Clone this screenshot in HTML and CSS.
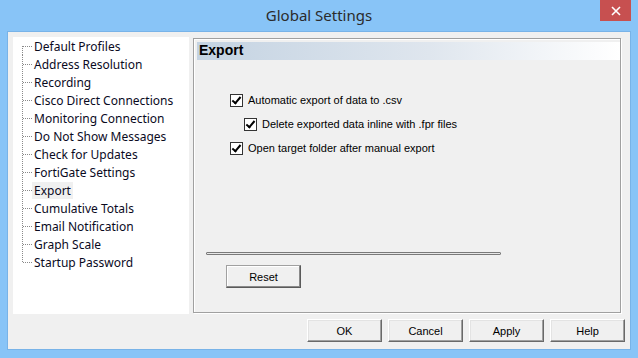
FILE: index.html
```html
<!DOCTYPE html>
<html lang="en">
<head>
  <meta charset="UTF-8">
  <title>Global Settings</title>
  <link rel="stylesheet" href="styles.css">
</head>
<body>
  <div class="window">
      <div class="titlebar">
          <span></span>
          <span class="title">Global Settings</span>
          <button class="close" title="Close">
              <svg width="10" height="10" viewBox="0 0 10 10"><path d="M1 1 L9 9 M9 1 L1 9" stroke="#fff" stroke-width="1.6" fill="none"/></svg>
          </button>
      </div>

      <div class="client">
          <div class="main">
              <ul class="tree">
                  <li><span class="label">Default Profiles</span></li>
                  <li><span class="label">Address Resolution</span></li>
                  <li><span class="label">Recording</span></li>
                  <li><span class="label">Cisco Direct Connections</span></li>
                  <li><span class="label">Monitoring Connection</span></li>
                  <li><span class="label">Do Not Show Messages</span></li>
                  <li><span class="label">Check for Updates</span></li>
                  <li><span class="label">FortiGate Settings</span></li>
                  <li class="selected"><span class="label">Export</span></li>
                  <li><span class="label">Cumulative Totals</span></li>
                  <li><span class="label">Email Notification</span></li>
                  <li><span class="label">Graph Scale</span></li>
                  <li class="last"><span class="label">Startup Password</span></li>
              </ul>

              <div class="panel">
                  <div class="panel-head">Export</div>
                  <div class="panel-body">
                      <div class="options">
                          <label class="check"><span class="box checked"></span>Automatic export of data to .csv</label>
                          <label class="check sub"><span class="box checked"></span>Delete exported data inline with .fpr files</label>
                          <label class="check"><span class="box checked"></span>Open target folder after manual export</label>
                      </div>
                      <div class="sep"></div>
                      <button class="btn btn-reset">Reset</button>
                  </div>
              </div>
          </div>

          <div class="actions">
              <button class="btn">OK</button>
              <button class="btn">Cancel</button>
              <button class="btn">Apply</button>
              <button class="btn">Help</button>
          </div>
      </div>
  </div>
</body>
</html>
```

FILE: styles.css
```css
* {
    margin: 0;
    padding: 0;
    box-sizing: border-box;
}

body {
    width: 638px;
    height: 358px;
    overflow: hidden;
    font-family: 'Liberation Sans', Arial, sans-serif;
    font-size: 11px;
    color: #000;
}

.window {
    width: 638px;
    height: 358px;
    background: #88c4f7;
    padding: 0 7px 8px;
    display: flex;
    flex-direction: column;
}

.titlebar {
    height: 31px;
    display: grid;
    grid-template-columns: 1fr auto 1fr;
    align-items: start;
}

.title {
    font-family: 'Noto Sans', 'Open Sans', sans-serif;
    font-size: 15px;
    color: #2b2b2b;
    line-height: 30px;
}

.close {
    justify-self: end;
    width: 31px;
    height: 21px;
    margin-right: 0;
    border: none;
    background: #c75050;
    display: flex;
    align-items: center;
    justify-content: center;
}

.client {
    flex: 1;
    background: #f0f0f0;
    border: 1px solid #78b3e8;
    padding: 5px 0 0 5px;
}

.main {
    display: flex;
    align-items: flex-start;
}

/* tree on the left */
.tree {
    list-style: none;
    width: 176px;
    height: 277px;
    background: #fff;
    padding: 0 0 0 9px;
    font-family: 'Noto Sans', 'Open Sans', sans-serif;
    font-size: 12px;
}

.tree li {
    height: 18px;
    display: flex;
    align-items: center;
}

.tree li::before {
    content: '';
    width: 10px;
    height: 18px;
    background:
        repeating-linear-gradient(to bottom, #8a8a8a 0 1px, transparent 1px 2px) 0 0 / 1px 100% no-repeat,
        repeating-linear-gradient(to right, transparent 0 1px, #8a8a8a 1px 2px) 0 9px / 10px 1px no-repeat;
}

.tree li:first-child::before {
    background:
        repeating-linear-gradient(to bottom, #8a8a8a 0 1px, transparent 1px 2px) 0 9px / 1px 9px no-repeat,
        repeating-linear-gradient(to right, transparent 0 1px, #8a8a8a 1px 2px) 0 9px / 10px 1px no-repeat;
}

.tree li.last::before {
    background:
        repeating-linear-gradient(to bottom, #8a8a8a 0 1px, transparent 1px 2px) 0 0 / 1px 10px no-repeat,
        repeating-linear-gradient(to right, transparent 0 1px, #8a8a8a 1px 2px) 0 9px / 10px 1px no-repeat;
}

.tree .label {
    padding: 0 2px;
    height: 17px;
    line-height: 17px;
    white-space: nowrap;
    color: #0a0a1e;
}

.tree .selected .label {
    background: #f0f0f0;
}

/* settings panel */
.panel {
    width: 428px;
    height: 275px;
    margin: 1px 0 0 4px;
    border: 1px solid #a0a0a0;
    box-shadow: 1px 1px 0 #fff, inset 1px 1px 0 #fff;
    padding: 3px 0 0 3px;
}

.panel-head {
    height: 18px;
    padding-left: 2px;
    font-size: 14px;
    font-weight: bold;
    line-height: 17px;
    background: linear-gradient(to right, #c4d3e2 0%, #dfe6ee 55%, #ffffff 100%);
}

.panel-body {
    padding-left: 9px;
}

.options {
    display: flex;
    flex-direction: column;
    gap: 8px;
    margin-top: 32px;
    padding-left: 24px;
}

.check {
    height: 16px;
    display: flex;
    align-items: center;
    gap: 5px;
    white-space: nowrap;
}

.check.sub {
    padding-left: 14px;
}

.box {
    width: 13px;
    height: 13px;
    border: 1px solid #333;
    background: #fff;
    display: inline-block;
    position: relative;
}

.box.checked::after {
    content: '';
    position: absolute;
    left: 3px;
    top: 0px;
    width: 3px;
    height: 7px;
    border: solid #000;
    border-width: 0 2px 2px 0;
    transform: rotate(40deg);
}

.sep {
    width: 295px;
    height: 3px;
    margin-top: 96px;
    border: 1px solid #7a7a7a;
    border-radius: 1px;
    background: #e8e8e8;
}

.btn {
    width: 75px;
    height: 23px;
    font-family: 'Liberation Sans', Arial, sans-serif;
    font-size: 11px;
    color: #000;
    background: #f0f0f0;
    border: 1px solid;
    border-color: #fff #696969 #696969 #fff;
    box-shadow: inset -1px -1px 0 #a0a0a0, inset 1px 1px 0 #e3e3e3;
}

.btn-reset {
    margin: 10px 0 0 20px;
    border-color: #a0a0a0 #5a5a5a #5a5a5a #a0a0a0;
    box-shadow: inset -1px -1px 0 #8a8a8a, inset 1px 1px 0 #fff;
}

.actions {
    display: flex;
    justify-content: flex-end;
    gap: 6px;
    margin-top: 5px;
    padding-right: 5px;
}
```
